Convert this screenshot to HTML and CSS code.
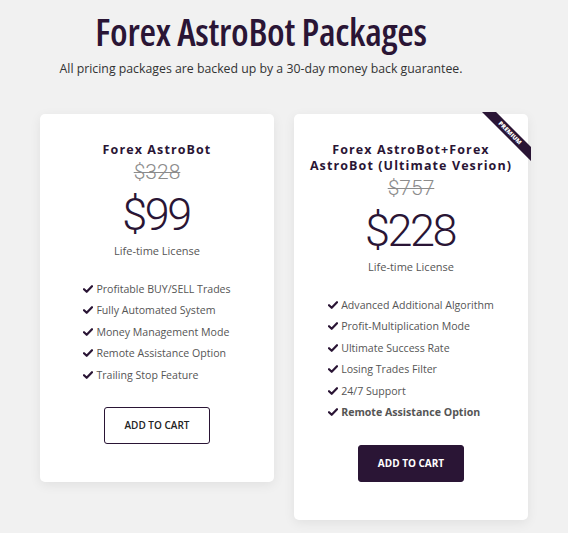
FILE: index.html
```html
<!DOCTYPE html>
<html lang="en">
<head>
<meta charset="utf-8">
<title>Forex AstroBot Packages</title>
<link rel="stylesheet" href="styles.css">
</head>
<body>
<header class="intro">
  <h1 class="heading">Forex AstroBot Packages</h1>
  <p class="lead">All pricing packages are backed up by a 30-day money back guarantee.</p>
</header>
<main class="plans">
  <section class="card">
    <h2 class="name">Forex AstroBot</h2>
    <div class="old">$328</div>
    <div class="price">$99</div>
    <div class="license">Life-time License</div>
    <ul class="features">
      <li><svg class="tick" viewBox="0 0 10 8"><path d="M1 4.2 L3.7 6.8 L9 1.2"/></svg>Profitable BUY/SELL Trades</li>
      <li><svg class="tick" viewBox="0 0 10 8"><path d="M1 4.2 L3.7 6.8 L9 1.2"/></svg>Fully Automated System</li>
      <li><svg class="tick" viewBox="0 0 10 8"><path d="M1 4.2 L3.7 6.8 L9 1.2"/></svg>Money Management Mode</li>
      <li><svg class="tick" viewBox="0 0 10 8"><path d="M1 4.2 L3.7 6.8 L9 1.2"/></svg>Remote Assistance Option</li>
      <li><svg class="tick" viewBox="0 0 10 8"><path d="M1 4.2 L3.7 6.8 L9 1.2"/></svg>Trailing Stop Feature</li>
    </ul>
    <a class="btn btn-outline" href="#">ADD TO CART</a>
  </section>
  <section class="card">
    <div class="ribbon"><span class="ribbon-band">PREMIUM</span></div>
    <h2 class="name">Forex AstroBot+Forex AstroBot (Ultimate Vesrion)</h2>
    <div class="old">$757</div>
    <div class="price">$228</div>
    <div class="license">Life-time License</div>
    <ul class="features">
      <li><svg class="tick" viewBox="0 0 10 8"><path d="M1 4.2 L3.7 6.8 L9 1.2"/></svg>Advanced Additional Algorithm</li>
      <li><svg class="tick" viewBox="0 0 10 8"><path d="M1 4.2 L3.7 6.8 L9 1.2"/></svg>Profit-Multiplication Mode</li>
      <li><svg class="tick" viewBox="0 0 10 8"><path d="M1 4.2 L3.7 6.8 L9 1.2"/></svg>Ultimate Success Rate</li>
      <li><svg class="tick" viewBox="0 0 10 8"><path d="M1 4.2 L3.7 6.8 L9 1.2"/></svg>Losing Trades Filter</li>
      <li><svg class="tick" viewBox="0 0 10 8"><path d="M1 4.2 L3.7 6.8 L9 1.2"/></svg>24/7 Support</li>
      <li class="strong"><svg class="tick" viewBox="0 0 10 8"><path d="M1 4.2 L3.7 6.8 L9 1.2"/></svg>Remote Assistance Option</li>
    </ul>
    <a class="btn btn-solid" href="#">ADD TO CART</a>
  </section>
</main>
</body>
</html>
```
FILE: styles.css
```css
html, body {
  margin: 0;
  padding: 0;
}
body {
  background: #f1f1f1;
  font-family: "Open Sans", "Liberation Sans", sans-serif;
  color: #2a1535;
  width: 568px;
  height: 533px;
  overflow: hidden;
}
.intro {
  text-align: center;
  padding: 9px 46px 0 0;
}
.heading {
  margin: 0;
  font-family: "Open Sans", sans-serif;
  font-stretch: 75%;
  font-weight: 600;
  font-size: 38px;
  line-height: 44px;
  letter-spacing: -0.3px;
  color: #2a1535;
}
.lead {
  margin: 7px 0 0;
  font-size: 12.3px;
  line-height: 18px;
  color: #333;
}
.plans {
  display: flex;
  justify-content: center;
  align-items: flex-start;
  gap: 20px;
  margin-top: 36px;
}
.card {
  position: relative;
  width: 234px;
  box-sizing: border-box;
  background: #fff;
  border-radius: 5px;
  box-shadow: 0 3px 12px rgba(0, 0, 0, 0.07);
  padding: 28px 14px 38px;
  text-align: center;
}
.name {
  margin: 0;
  font-size: 12.5px;
  font-weight: 700;
  line-height: 16px;
  letter-spacing: 1.1px;
  color: #2a1535;
}
.old {
  margin-top: 3px;
  font-family: Roboto, "Liberation Sans", sans-serif;
  font-weight: 300;
  font-size: 21px;
  line-height: 22px;
  color: #8c8c8c;
  text-decoration: line-through;
  text-decoration-thickness: 1px;
}
.price {
  margin-top: 6px;
  font-family: Roboto, "Liberation Sans", sans-serif;
  font-weight: 300;
  font-size: 45px;
  line-height: 52px;
  letter-spacing: -2.5px;
  text-indent: -2px;
  color: #2a1535;
}
.license {
  margin-top: 2px;
  font-size: 11px;
  line-height: 16px;
  color: #555;
}
.features {
  list-style: none;
  display: inline-block;
  text-align: left;
  margin: 19px 0 0;
  padding: 0;
}
.features li {
  display: flex;
  align-items: center;
  height: 21.5px;
  font-size: 10.6px;
  color: #555;
  white-space: nowrap;
}
.features li.strong {
  font-weight: 700;
}
.tick {
  width: 10px;
  height: 8px;
  margin-right: 3px;
  flex: none;
}
.tick path {
  fill: none;
  stroke: #2a1535;
  stroke-width: 2.2;
  stroke-linecap: round;
  stroke-linejoin: round;
}
.btn {
  display: block;
  margin: 21.5px auto 0;
  width: 106px;
  height: 37px;
  box-sizing: border-box;
  border-radius: 3px;
  font-size: 10px;
  line-height: 35px;
  text-decoration: none;
  text-align: center;
}
.btn-outline {
  border: 1px solid #2a1535;
  color: #222;
  font-weight: 600;
}
.btn-solid {
  background: #2a1535;
  border: 1px solid #2a1535;
  color: #fff;
  font-weight: 700;
}
.ribbon {
  position: absolute;
  top: -2px;
  right: -3px;
  width: 49px;
  height: 49px;
  overflow: hidden;
}
.ribbon-band {
  position: absolute;
  left: -7px;
  top: 15.5px;
  width: 70px;
  height: 10px;
  background: #2a1535;
  color: #fff;
  font-size: 6px;
  font-weight: 800;
  line-height: 10px;
  text-align: center;
  letter-spacing: 0.1px;
  transform: rotate(45deg);
}
```
